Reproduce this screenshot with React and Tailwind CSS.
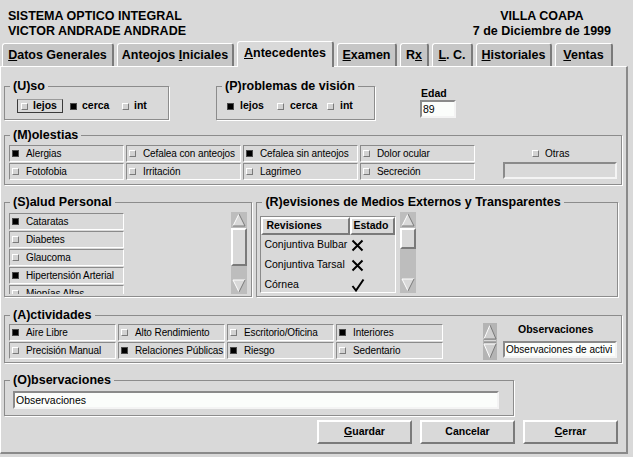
const sunken = "border border-t-[#8a8a8a] border-l-[#8a8a8a] border-r-white border-b-white";
const raised = "border border-t-white border-l-white border-r-[#7a7a7a] border-b-[#7a7a7a]";
const field = "border-2 border-t-[#8a8a8a] border-l-[#8a8a8a] border-r-[#f4f4f4] border-b-[#f4f4f4]";

const tabs = [
  { w: "w-[112px]", pre: "", ul: "D", post: "atos Generales" },
  { w: "w-[117px]", pre: "Anteojos ", ul: "I", post: "niciales" },
  { w: "w-[97px]", pre: "", ul: "A", post: "ntecedentes", active: true },
  { w: "w-[60px]", pre: "", ul: "E", post: "xamen" },
  { w: "w-[29px]", pre: "R", ul: "x", post: "" },
  { w: "w-[41px]", pre: "", ul: "L", post: ". C." },
  { w: "w-[76px]", pre: "", ul: "H", post: "istoriales" },
  { w: "w-[58px]", pre: "", ul: "V", post: "entas" },
];

function Ind({ on }) {
  return on ? (
    <span className="inline-block w-[7px] h-[7px] shrink-0 bg-black border border-[#4a4a4a]" />
  ) : (
    <span className={`inline-block w-[7px] h-[7px] shrink-0 bg-[#d2d2d2] ${raised}`} />
  );
}

function Cell({ label, on, w = "w-[115px]" }) {
  return (
    <div className={`flex shrink-0 items-center h-[17px] ${w} pl-[2px] gap-[7px] ${sunken} text-[10px] tracking-[-0.1px] whitespace-nowrap overflow-hidden`}>
      <Ind on={on} />
      <span>{label}</span>
    </div>
  );
}

function Group({ title, className, children }) {
  return (
    <fieldset className={`border border-[#8c8c8c] shadow-[1px_1px_0_#fff] ${className}`}>
      <legend className="ml-[5px] px-[3px] text-[12.5px] font-bold leading-[14px]">{title}</legend>
      {children}
    </fieldset>
  );
}

function Arrow({ down }) {
  return (
    <svg width="16" height="16" viewBox="0 0 16 16" className="block shrink-0">
      {down ? (
        <>
          <polygon points="2,2 14,2 8,14" fill="#d9d9d9" />
          <path d="M2 2 L14 2 M2 2 L8 14" stroke="#ffffff" strokeWidth="1" fill="none" />
          <path d="M8 14 L14 2" stroke="#7a7a7a" strokeWidth="1" fill="none" />
        </>
      ) : (
        <>
          <polygon points="8,2 14,14 2,14" fill="#d9d9d9" />
          <path d="M2 14 L8 2" stroke="#ffffff" strokeWidth="1" fill="none" />
          <path d="M8 2 L14 14 L2 14" stroke="#7a7a7a" strokeWidth="1" fill="none" />
        </>
      )}
    </svg>
  );
}

function Scroll({ h, thumb }) {
  return (
    <div className={`flex flex-col w-[16px] ${h} bg-[#bdbdbd]`}>
      <Arrow />
      <div className="flex-1">
        <div className={`${thumb} bg-[#d9d9d9] ${raised} border-2`} />
      </div>
      <Arrow down />
    </div>
  );
}

function Mark({ ok }) {
  return ok ? (
    <svg width="14" height="14" viewBox="0 0 14 14">
      <path d="M1.5 8 L5 12.5 L12.5 1.5" stroke="#000" strokeWidth="2" fill="none" />
    </svg>
  ) : (
    <svg width="13" height="13" viewBox="0 0 13 13">
      <path d="M1.5 1.5 L11.5 11.5 M11.5 1.5 L1.5 11.5" stroke="#000" strokeWidth="2" fill="none" />
    </svg>
  );
}

function Button({ pre, ul, post }) {
  return (
    <button className="w-[95px] h-[24px] bg-[#d9d9d9] border-2 border-t-white border-l-white border-r-[#7a7a7a] border-b-[#7a7a7a] text-[10.5px] font-bold">
      {pre}
      <u>{ul}</u>
      {post}
    </button>
  );
}

export default function App() {
  return (
    <div className="w-[633px] h-[457px] bg-[#d9d9d9] text-black font-['Liberation_Sans',Arial,sans-serif] overflow-hidden">
      <header className="flex justify-between h-[41px] pt-[9px] pl-[8px] pr-[22px] text-[12.5px] font-bold leading-[15px]">
        <div>
          <div>SISTEMA OPTICO INTEGRAL</div>
          <div>VICTOR ANDRADE ANDRADE</div>
        </div>
        <div className="text-center">
          <div>VILLA COAPA</div>
          <div>7 de Diciembre de 1999</div>
        </div>
      </header>

      <nav className="flex items-end h-[25px] pl-[2px] gap-[3px]">
        {tabs.map((t) => (
          <div
            key={t.ul + t.post}
            className={`${t.w} flex justify-center rounded-t-[3px] border-l border-t border-r-2 border-white border-r-[#7a7a7a] text-[12.5px] font-bold leading-[14px] whitespace-nowrap ${
              t.active ? "relative z-10 h-[26px] -mb-px pt-[4px] bg-[#d9d9d9]" : "h-[23px] pt-[4px] bg-[#c6c6c6]"
            }`}
          >
            <span>
              {t.pre}
              <u>{t.ul}</u>
              {t.post}
            </span>
          </div>
        ))}
      </nav>

      <main className="w-[628px] border-t border-l border-white border-r-2 border-b-2 border-r-[#8a8a8a] border-b-[#8a8a8a] pl-[3px] pr-[8px] pt-[12px] pb-[8px]">
        {/* uso / problemas / edad */}
        <div className="flex items-start">
          <Group title="(U)so" className="w-[165px] h-[41px]">
            <div className="flex items-center mt-[6px] h-[14px] text-[10.5px] font-bold">
              <div className="flex items-center gap-[5px] ml-[12px] w-[46px] h-[14px] pl-[3px] border border-[#3a3a3a] border-t-[#9a9a9a]">
                <Ind />
                <span>lejos</span>
              </div>
              <div className="flex items-center gap-[5px] ml-[7px] w-[52px]">
                <Ind on />
                <span>cerca</span>
              </div>
              <div className="flex items-center gap-[5px]">
                <Ind />
                <span>int</span>
              </div>
            </div>
          </Group>

          <Group title="(P)roblemas de visión" className="ml-[47px] w-[159px] h-[41px]">
            <div className="flex items-center mt-[6px] h-[14px] text-[10.5px] font-bold pl-[10px]">
              <div className="flex items-center gap-[6px] w-[50px]">
                <Ind on />
                <span>lejos</span>
              </div>
              <div className="flex items-center gap-[6px] w-[50px]">
                <Ind />
                <span>cerca</span>
              </div>
              <div className="flex items-center gap-[6px]">
                <Ind />
                <span>int</span>
              </div>
            </div>
          </Group>

          <div className="ml-[45px] mt-[8px] flex flex-col">
            <span className="text-[10.5px] font-bold leading-[12px] pl-[1px]">Edad</span>
            <div className={`mt-[1px] w-[36px] h-[18px] bg-[#fbfdfb] ${field} text-[10.5px] leading-[14px] pl-[1px]`}>89</div>
          </div>
        </div>

        {/* molestias */}
        <Group title="(M)olestias" className="mt-[8px] w-[618px] h-[57px]">
          <div className="flex items-start mt-[3px] pl-[4px]">
            <div className="grid grid-cols-[repeat(4,115px)] gap-x-[2px] gap-y-[1px]">
              <Cell label="Alergias" on />
              <Cell label="Cefalea con anteojos" />
              <Cell label="Cefalea sin anteojos" on />
              <Cell label="Dolor ocular" />
              <Cell label="Fotofobia" />
              <Cell label="Irritación" />
              <Cell label="Lagrimeo" />
              <Cell label="Secreción" />
            </div>
            <div className="ml-[28px] flex flex-col w-[114px]">
              <div className="flex items-center h-[17px] pl-[29px] gap-[6px] text-[10px]">
                <Ind />
                <span>Otras</span>
              </div>
              <div className={`h-[17px] ${field}`} />
            </div>
          </div>
        </Group>

        {/* salud / revisiones */}
        <div className="flex gap-[4px] mt-[10px]">
          <Group title="(S)alud Personal" className="w-[250px] h-[102px]">
            <div className="flex items-start mt-[3px] pl-[4px]">
              <div className="flex flex-col gap-[1px] w-[115px] h-[82px] pt-[1px] overflow-hidden">
                <Cell label="Cataratas" on />
                <Cell label="Diabetes" />
                <Cell label="Glaucoma" />
                <Cell label="Hipertensión Arterial" on />
                <Cell label="Miopías Altas" />
              </div>
              <div className="ml-[107px]">
                <Scroll h="h-[82px]" thumb="h-[38px]" />
              </div>
            </div>
          </Group>

          <Group title="(R)evisiones de Medios Externos y Transparentes" className="w-[364px] h-[102px]">
            <div className="flex items-start mt-[3px] pl-[3px]">
              <div className={`mt-[4px] w-[136px] h-[77px] overflow-hidden ${sunken} text-[10.5px]`}>
                <div className="flex h-[18px] font-bold">
                  <div className={`w-[89px] ${raised} border-2 pl-[3px] flex items-center`}>Revisiones</div>
                  <div className={`w-[45px] ${raised} border-2 pl-[1px] flex items-center`}>Estado</div>
                </div>
                {[
                  ["Conjuntiva Bulbar", false],
                  ["Conjuntiva Tarsal", false],
                  ["Córnea", true],
                ].map(([l, ok]) => (
                  <div key={l} className="flex items-center h-[20px]">
                    <span className="w-[90px] pl-[3px] whitespace-nowrap">{l}</span>
                    <Mark ok={ok} />
                  </div>
                ))}
              </div>
              <div className="ml-[4px]">
                <Scroll h="h-[81px]" thumb="h-[21px]" />
              </div>
            </div>
          </Group>
        </div>

        {/* actividades */}
        <Group title="(A)ctividades" className="mt-[11px] w-[618px] h-[55px]">
          <div className="flex items-start mt-[1px] pl-[4px]">
            <div className="mt-[1px] grid grid-cols-[repeat(4,107px)] gap-x-[2px] gap-y-[1px]">
              <Cell w="w-[107px]" label="Aire Libre" on />
              <Cell w="w-[107px]" label="Alto Rendimiento" />
              <Cell w="w-[107px]" label="Escritorio/Oficina" />
              <Cell w="w-[107px]" label="Interiores" on />
              <Cell w="w-[107px]" label="Precisión Manual" />
              <Cell w="w-[107px]" label="Relaciones Públicas" on />
              <Cell w="w-[107px]" label="Riesgo" on />
              <Cell w="w-[107px]" label="Sedentario" />
            </div>
            <svg width="14" height="37" viewBox="0 0 14 37" className="ml-[40px] block">
              <rect x="0" y="0" width="14" height="37" fill="#b4b4b4" />
              <polygon points="7,2 13,16 1,16" fill="#cfcfcf" />
              <path d="M1 16 L7 2" stroke="#fff" fill="none" />
              <path d="M7 2 L13 16 L1 16" stroke="#7a7a7a" fill="none" />
              <path d="M1 18 L13 18" stroke="#fff" />
              <path d="M1 19 L13 19" stroke="#7a7a7a" />
              <polygon points="1,21 13,21 7,35" fill="#cfcfcf" />
              <path d="M1 21 L13 21 M1 21 L7 35" stroke="#fff" fill="none" />
              <path d="M7 35 L13 21" stroke="#7a7a7a" fill="none" />
            </svg>
            <div className="ml-[6px] flex flex-col w-[114px]">
              <span className="h-[18px] pl-[15px] text-[10.5px] font-bold leading-[12px]">Observaciones</span>
              <div className={`h-[17px] bg-[#fbfdfb] ${field} text-[10px] leading-[13px] pl-[1px] whitespace-nowrap overflow-hidden`}>
                Observaciones de activi
              </div>
            </div>
          </div>
        </Group>

        {/* observaciones */}
        <Group title="(O)bservaciones" className="mt-[10px] w-[510px] h-[43px]">
          <div className={`mt-[4px] ml-[8px] w-[486px] h-[18px] bg-[#fbfdfb] ${field} text-[10.5px] leading-[14px] pl-[1px]`}>
            Observaciones
          </div>
        </Group>

        <div className="flex justify-end gap-[8px] mt-[4px]">
          <Button pre="" ul="G" post="uardar" />
          <Button pre="Cancelar" ul="" post="" />
          <Button pre="" ul="C" post="errar" />
        </div>
      </main>
    </div>
  );
}
